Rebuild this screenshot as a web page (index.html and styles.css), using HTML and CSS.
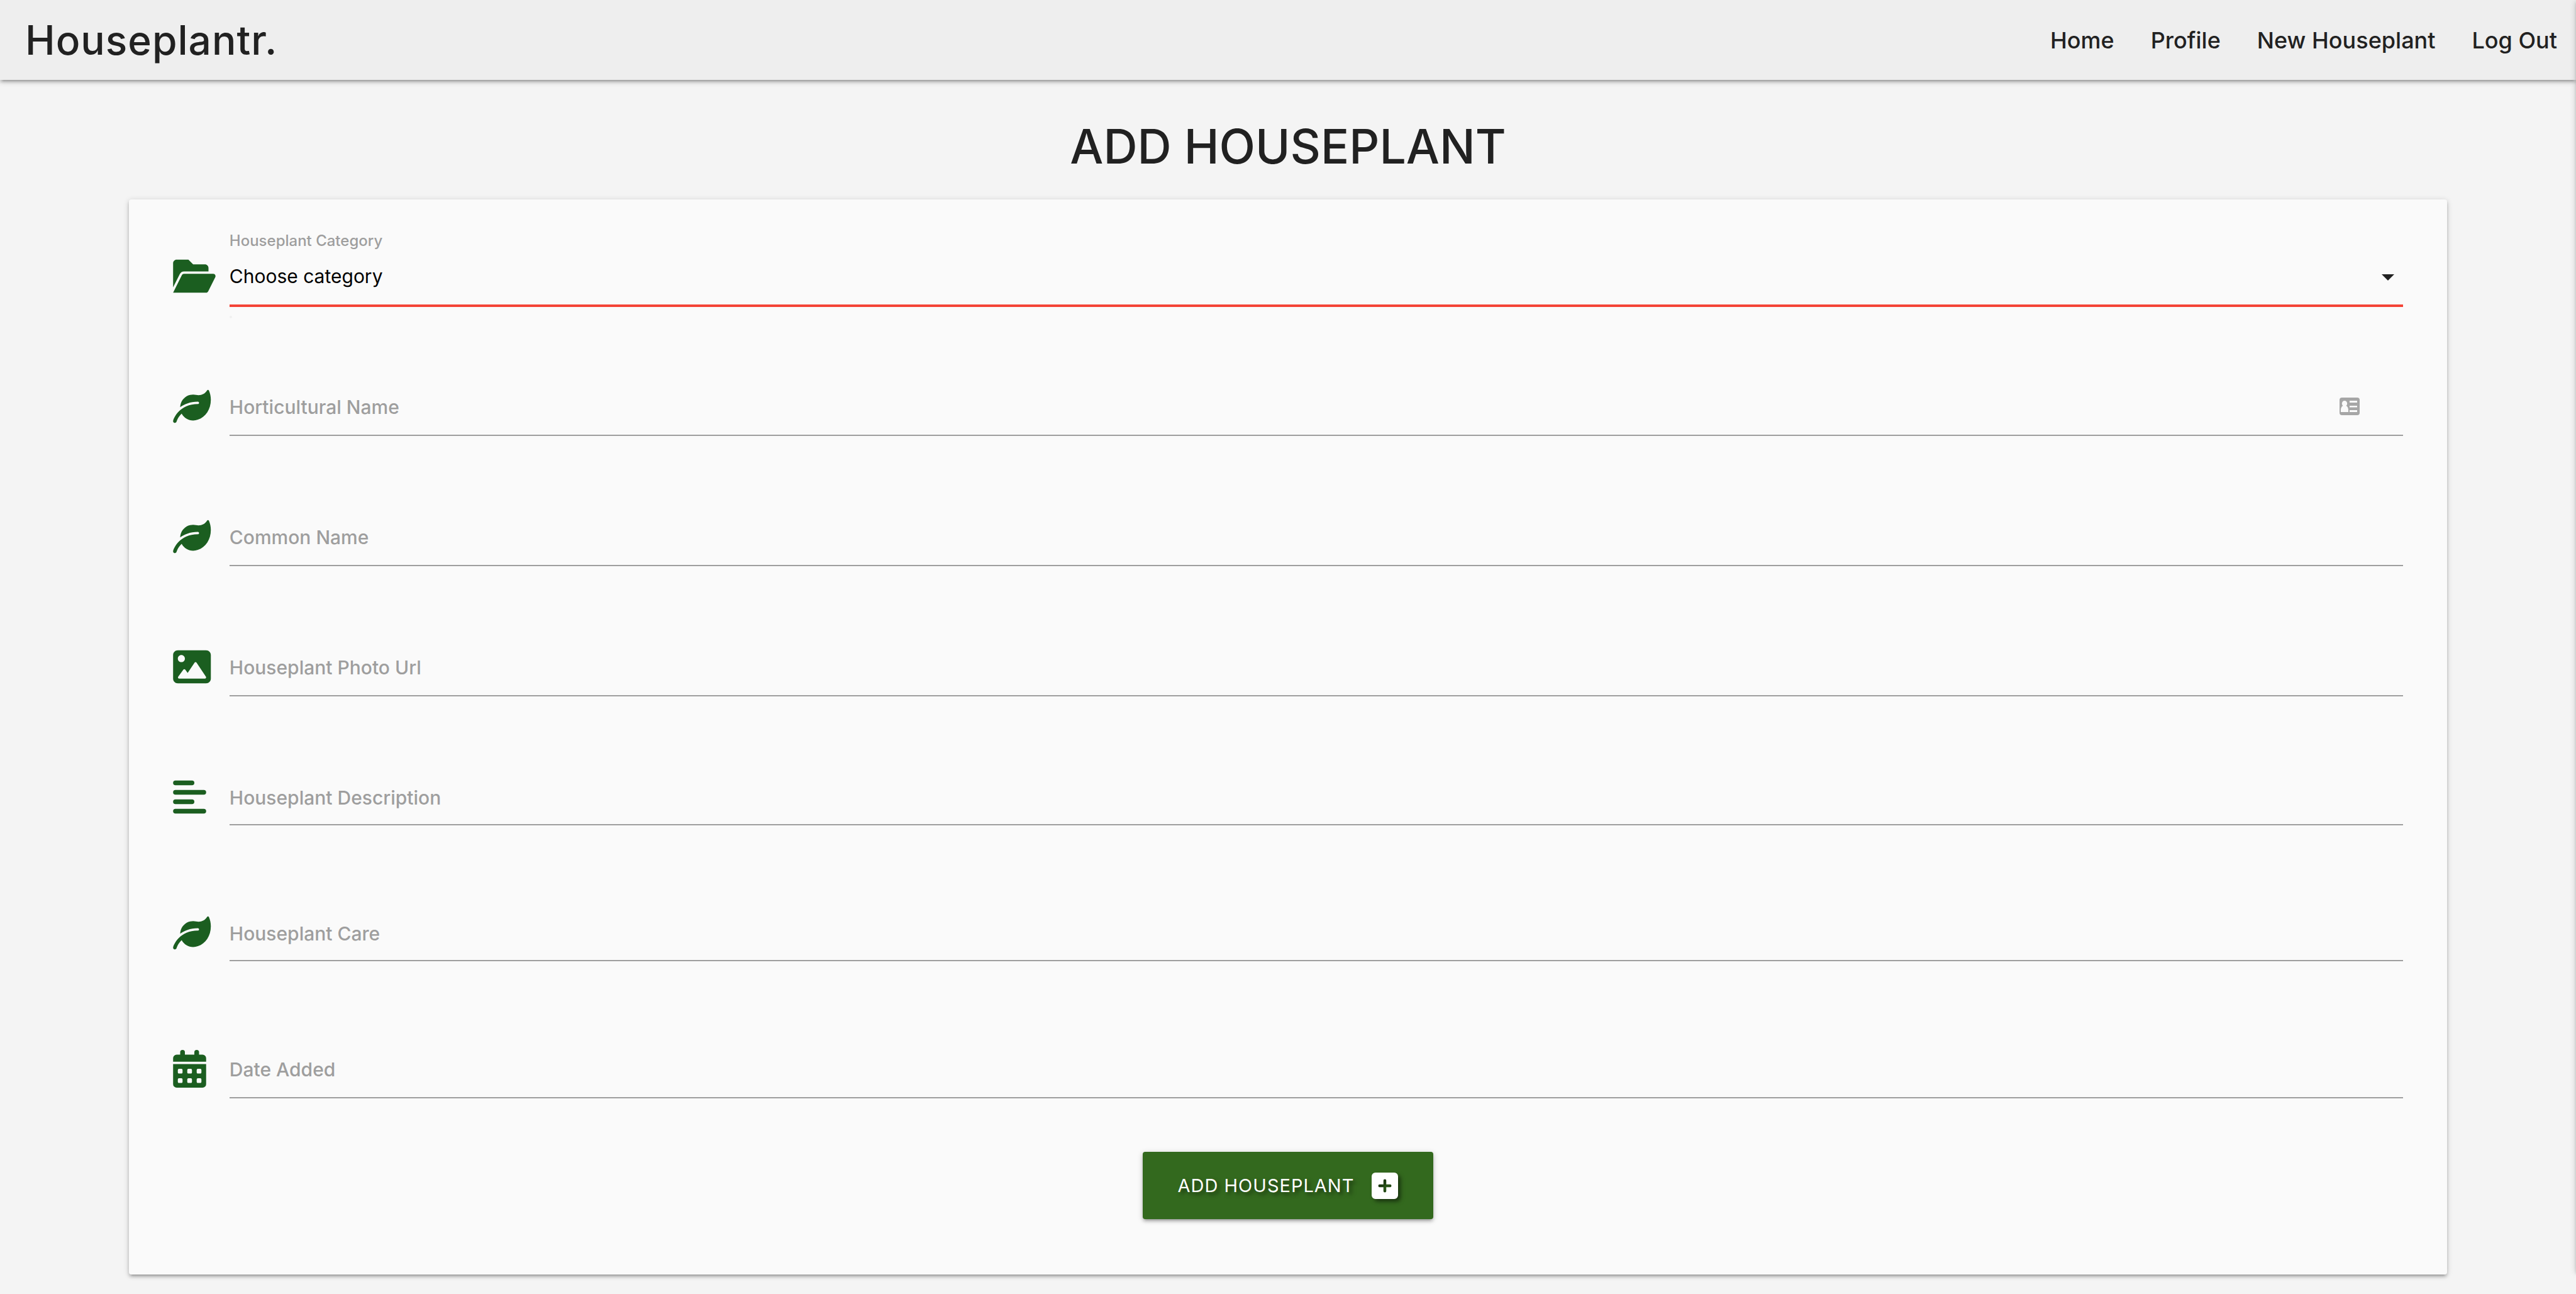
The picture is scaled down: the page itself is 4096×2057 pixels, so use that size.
FILE: index.html
```html
<!DOCTYPE html>
<html lang="en">
<head>
  <meta charset="utf-8">
  <meta name="viewport" content="width=device-width, initial-scale=1">
  <title>Houseplantr.</title>
  <link rel="stylesheet" href="styles.css">
</head>
<body>
  <header class="navbar">
    <a class="brand" href="#">Houseplantr.</a>
    <nav class="nav-links">
      <a href="#">Home</a>
      <a href="#">Profile</a>
      <a href="#">New Houseplant</a>
      <a href="#">Log Out</a>
    </nav>
  </header>

  <!-- Off-canvas menu, parked just past the right edge -->
  <div class="sidenav"></div>

  <main class="page">
    <h1 class="page-title">ADD HOUSEPLANT</h1>

    <form class="card">
      <div class="field field-select">
        <svg class="icon" viewBox="0 0 576 512" aria-hidden="true"><path d="M147.8 192H480V144C480 117.500 458.500 96 432 96h-160l-64-64h-160C21.490 32 0 53.490 0 80v328.400l90.540-181.100C101.400 205.600 123.400 192 147.800 192zM543.100 224H147.800C135.700 224 124.600 230.800 119.200 241.700L0 480h447.100c12.120 0 23.200-6.852 28.620-17.690l96-192C583.200 249 567.700 224 543.100 224z"/></svg>
        <label class="label-small" for="category">Houseplant Category</label>
        <select class="control" id="category">
          <option>Choose category</option>
        </select>
        <svg class="caret" viewBox="0 0 20 10" aria-hidden="true"><path d="M0 0h20L10 10z"/></svg>
      </div>

      <div class="field">
        <svg class="icon" viewBox="0 0 576 512" aria-hidden="true"><use href="#leaf"/></svg>
        <input class="control" type="text" id="horticultural">
        <label class="label" for="horticultural">Horticultural Name</label>
        <svg class="autofill" viewBox="0 0 32 28" aria-hidden="true">
          <rect width="32" height="28" rx="4" fill="#a6a6a6"/>
          <path fill="#fafafa" d="M8 5a4 4.500 0 0 1 2.500 8.100C12.800 14.200 14 17 14 20v3H2v-3c0-3 1.200-5.800 3.500-6.900A4 4.500 0 0 1 8 5zM16 5h12v3H16zM16 13h12v2.500H16zM16 20h12v3H16z"/>
        </svg>
      </div>

      <div class="field">
        <svg class="icon" viewBox="0 0 576 512" aria-hidden="true"><path id="leaf" d="M512 165.400c0 127.900-70.050 235.300-175.300 270.100c-20.040 7.938-41.830 12.460-64.690 12.460c-64.900 0-125.200-36.510-155.700-94.470c-54.130 49.930-68.710 107-68.960 108.100C44.720 472.600 34.870 480 24.020 480c-1.844 0-3.727-.2187-5.602-.6562c-12.890-3.098-20.840-16.080-17.750-28.960c9.598-39.500 90.470-226.400 335.300-226.400C344.800 224 352 216.800 352 208S344.800 192 336 192C228.600 192 151 226.600 96.290 267.600c.1934-10.820 1.242-21.840 3.535-33.050c13.470-65.810 66.040-119 131.400-134.200c28.330-6.562 55.680-6.013 80.930-.0054c56 13.320 118.200-7.412 149.300-61.240c5.664-9.828 20.020-9.516 24.660 .8282C502.700 76.760 512 121.900 512 165.400z"/></svg>
        <input class="control" type="text" id="common">
        <label class="label" for="common">Common Name</label>
      </div>

      <div class="field">
        <svg class="icon" viewBox="0 0 576 512" aria-hidden="true"><path d="M448 32h-384C28.650 32 0 60.650 0 96v320c0 35.350 28.650 64 64 64h384c35.350 0 64-28.650 64-64V96C512 60.650 483.300 32 448 32zM112 96c26.510 0 48 21.490 48 48S138.500 192 112 192s-48-21.490-48-48S85.480 96 112 96zM446.100 407.600C443.300 412.800 437.900 416 432 416H82.010c-6.021 0-11.530-3.379-14.260-8.750c-2.730-5.367-2.215-11.810 1.334-16.680l70-96C142.100 290.400 146.900 288 152 288s9.916 2.441 12.930 6.574l32.460 44.510l93.300-139.100C293.700 194.700 298.700 192 304 192s10.350 2.672 13.310 7.125l128 192C448.600 396 448.900 402.300 446.100 407.600z"/></svg>
        <input class="control" type="text" id="photo">
        <label class="label" for="photo">Houseplant Photo Url</label>
      </div>

      <div class="field field-area">
        <svg class="icon" viewBox="0 0 576 512" aria-hidden="true"><rect y="32" width="288" height="64" rx="32"/><rect y="160" width="448" height="64" rx="32"/><rect y="288" width="288" height="64" rx="32"/><rect y="416" width="448" height="64" rx="32"/></svg>
        <textarea class="control" id="description"></textarea>
        <label class="label" for="description">Houseplant Description</label>
      </div>

      <div class="field field-area">
        <svg class="icon" viewBox="0 0 576 512" aria-hidden="true"><use href="#leaf"/></svg>
        <textarea class="control" id="care"></textarea>
        <label class="label" for="care">Houseplant Care</label>
      </div>

      <div class="field">
        <svg class="icon" viewBox="0 0 576 512" aria-hidden="true">
          <path d="M96 32a32 32 0 0 1 64 0v32h128V32a32 32 0 0 1 64 0v32h48a48 48 0 0 1 48 48v48H0v-48a48 48 0 0 1 48-48h48zM0 192h448v272a48 48 0 0 1-48 48H48a48 48 0 0 1-48-48z"/>
          <g fill="#fafafa"><rect x="64" y="256" width="64" height="64" rx="16"/><rect x="192" y="256" width="64" height="64" rx="16"/><rect x="320" y="256" width="64" height="64" rx="16"/><rect x="64" y="384" width="64" height="64" rx="16"/><rect x="192" y="384" width="64" height="64" rx="16"/><rect x="320" y="384" width="64" height="64" rx="16"/></g>
        </svg>
        <input class="control" type="text" id="date">
        <label class="label" for="date">Date Added</label>
      </div>

      <button class="submit" type="submit">
        ADD HOUSEPLANT
        <svg class="plus" viewBox="0 32 448 448" aria-hidden="true"><path fill="#fff" fill-rule="evenodd" d="M64 32h320a64 64 0 0 1 64 64v320a64 64 0 0 1-64 64H64a64 64 0 0 1-64-64V96a64 64 0 0 1 64-64zM200 168v64h-64a24 24 0 0 0 0 48h64v64a24 24 0 0 0 48 0v-64h64a24 24 0 0 0 0-48h-64v-64a24 24 0 0 0-48 0z"/></svg>
      </button>
    </form>
  </main>
</body>
</html>
```

FILE: styles.css
```css
:root {
  --ink: #212121;
  --muted: #9e9e9e;
  --leaf: #1b5e20;
  --error: #f44336;
  --raised: 0 4px 4px 0 rgba(0, 0, 0, 0.14),
            0 6px 2px -4px rgba(0, 0, 0, 0.12),
            0 2px 10px 0 rgba(0, 0, 0, 0.2);
}

* {
  box-sizing: border-box;
}

body {
  min-height: 100vh;
  margin: 0;
  background: #f4f4f4;
  color: var(--ink);
  font-family: Inter, "Liberation Sans", sans-serif;
}

/* Top bar */
.navbar {
  display: flex;
  align-items: center;
  justify-content: space-between;
  height: 127px;
  padding: 0 0 0 40px;
  background: #eee;
  box-shadow: var(--raised);
}

.navbar a {
  color: inherit;
  text-decoration: none;
}

.brand {
  font-size: 64px;
  font-weight: 500;
  letter-spacing: 1px;
}

.nav-links {
  display: flex;
  font-size: 36px;
  font-weight: 500;
}

.nav-links a {
  padding: 0 29px;
}

.nav-links a:last-child {
  padding-right: 30px;
}

.sidenav {
  position: fixed;
  top: 0;
  bottom: 36px;
  left: 100%;
  width: 600px;
  box-shadow: var(--raised);
}

/* Page */
.page {
  width: 90%;
  margin: 0 auto;
  padding-bottom: 31px;
}

.page-title {
  margin: 64px 0 42px;
  font-size: 75px;
  font-weight: 500;
  line-height: 84px;
  text-align: center;
}

.card {
  display: flex;
  flex-direction: column;
  gap: 109px;
  padding: 48px 70px 88px;
  border-radius: 4px;
  background: #fafafa;
  box-shadow: var(--raised);
}

/* Form rows: icon column, then label and control sharing one cell */
.field {
  display: grid;
  grid-template-columns: 90px 1fr;
  grid-template-rows: 98px;
}

.field-select {
  grid-template-rows: 23px 98px;
}

/* Faint marker under the select */
.field-select::after {
  content: "";
  grid-area: -2 / 2;
  place-self: end start;
  width: 4px;
  height: 4px;
  margin-bottom: -20px;
  border-radius: 2px;
  background: #f0f0f0;
}

.field-area {
  margin-bottom: 9px;
}

.icon {
  grid-area: -2 / 1;
  align-self: end;
  width: 68px;
  height: 60px;
  margin-bottom: 17px;
  fill: var(--leaf);
}

.control {
  grid-area: -2 / 2;
  width: 100%;
  height: 98px;
  margin: 0;
  padding: 0;
  border: 0;
  border-bottom: 2px solid var(--muted);
  border-radius: 0;
  outline: 0;
  background: transparent;
  color: #000;
  font: 400 30px/48px Inter, "Liberation Sans", sans-serif;
  appearance: none;
  resize: none;
}

textarea.control {
  height: 96px;
}

select.control {
  padding-top: 6px;
  border-color: var(--error);
  box-shadow: 0 2px 0 0 var(--error);
}

.label {
  grid-area: -2 / 2;
  place-self: end start;
  margin-bottom: 22px;
  color: var(--muted);
  font-size: 30px;
  font-weight: 500;
  line-height: 48px;
}

.label-small {
  grid-area: 1 / 2;
  color: var(--muted);
  font-size: 24px;
  font-weight: 500;
  line-height: 36px;
}

.caret,
.autofill {
  grid-area: -2 / 2;
  place-self: end;
  pointer-events: none;
}

.caret {
  width: 20px;
  height: 10px;
  margin: 0 14px 40px 0;
  fill: var(--ink);
}

.autofill {
  width: 32px;
  height: 28px;
  margin: 0 69px 33px 0;
}

/* Submit */
.submit {
  display: flex;
  align-items: center;
  align-self: center;
  gap: 28px;
  height: 107px;
  margin-top: -24px;
  padding: 0 56px;
  border: 0;
  border-radius: 4px;
  background: #33691e;
  box-shadow: var(--raised);
  color: #fff;
  font: 400 29px/48px Inter, "Liberation Sans", sans-serif;
  letter-spacing: 1px;
  text-shadow: 4px 4px 6px rgba(0, 0, 0, 0.5);
}

.plus {
  width: 42px;
  height: 42px;
  filter: drop-shadow(4px 4px 3px rgba(0, 0, 0, 0.5));
}
```
